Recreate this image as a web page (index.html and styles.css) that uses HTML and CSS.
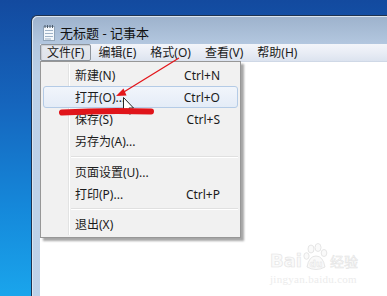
FILE: index.html
```html
<html>
<head>
<title>无标题 - 记事本</title>
<link rel="stylesheet" href="styles.css">
</head>
<body>

<div class="desktop">
  <div class="window">
    <div class="titlebar">
      <svg class="app-icon" width="12" height="16" viewBox="0 0 12 16">
        <rect x="0.5" y="1.5" width="11" height="14" fill="#f4f8fc" stroke="#8fa3b8"/>
        <line x1="2" y1="5.5" x2="10" y2="5.5" stroke="#9fb3c8"/>
        <line x1="2" y1="8.5" x2="10" y2="8.5" stroke="#9fb3c8"/>
        <line x1="2" y1="11.5" x2="10" y2="11.5" stroke="#9fb3c8"/>
        <line x1="2" y1="14" x2="8" y2="14" stroke="#9fb3c8"/>
        <line x1="2" y1="0" x2="2" y2="3" stroke="#4d5b6a"/>
        <line x1="4.5" y1="0" x2="4.5" y2="3" stroke="#4d5b6a"/>
        <line x1="7" y1="0" x2="7" y2="3" stroke="#4d5b6a"/>
        <line x1="9.5" y1="0" x2="9.5" y2="3" stroke="#4d5b6a"/>
      </svg>
      <span class="title">无标题 - 记事本</span>
    </div>
    <div class="menubar">
      <span class="menu-item pressed">文件(F)</span>
      <span class="menu-item">编辑(E)</span>
      <span class="menu-item">格式(O)</span>
      <span class="menu-item">查看(V)</span>
      <span class="menu-item">帮助(H)</span>
    </div>
    <div class="client"></div>
  </div>

  <div class="dropdown">
    <div class="row"><span>新建(N)</span><span class="key">Ctrl+N</span></div>
    <div class="row hot"><span>打开(O)...</span><span class="key">Ctrl+O</span></div>
    <div class="row"><span>保存(S)</span><span class="key">Ctrl+S</span></div>
    <div class="row"><span>另存为(A)...</span></div>
    <div class="sep"></div>
    <div class="row"><span>页面设置(U)...</span></div>
    <div class="row"><span>打印(P)...</span><span class="key">Ctrl+P</span></div>
    <div class="sep"></div>
    <div class="row"><span>退出(X)</span></div>
  </div>

  <svg class="marks" width="387" height="296" viewBox="0 0 387 296">
    <!-- mouse pointer -->
    <path d="M123.5 97.5 L123.5 112 L127 108.8 L129.6 114.2 L131.4 113.4 L128.9 108 L133.5 108 Z" fill="#fff" stroke="#111" stroke-width="0.9"/>
    <!-- red arrow -->
    <line x1="179" y1="58" x2="123" y2="92.5" stroke="#e3161b" stroke-width="1.3"/>
    <path d="M116 96 L123.5 88.5 L126.5 95.5 Z" fill="#e3161b"/>
    <!-- red underline -->
    <path d="M62 112.5 Q105 110 151 111.5" stroke="#e0141a" stroke-width="6" stroke-linecap="round" fill="none"/>
  </svg>

  <div class="watermark">
    <div class="brand">
      <span class="bai">Bai</span>
      <svg class="paw" width="26" height="28" viewBox="0 0 26 28">
        <ellipse cx="8" cy="6" rx="3" ry="4" fill="#fafafa" stroke="#e6e6e6"/>
        <ellipse cx="15" cy="4.5" rx="3" ry="4" fill="#fafafa" stroke="#e6e6e6"/>
        <ellipse cx="21" cy="10" rx="2.8" ry="3.5" fill="#fafafa" stroke="#e6e6e6"/>
        <ellipse cx="3.5" cy="13" rx="2.6" ry="3.3" fill="#fafafa" stroke="#e6e6e6"/>
        <path d="M4 24 Q6 13 13 13 Q20 13 22 24 Q13 29 4 24 Z" fill="#fafafa" stroke="#e6e6e6"/>
        <text x="13" y="24" text-anchor="middle" class="du">du</text>
      </svg>
      <span class="jy">经验</span>
    </div>
    <div class="site">jingyan.baidu.com</div>
  </div>
</div>

</body>
</html>
```

FILE: styles.css
```css
* {
  box-sizing: border-box;
}
body {
  margin: 0;
  font-family: "Noto Sans", "Noto Sans CJK SC", sans-serif;
  font-size: 12px;
  color: #1b1b1b;
}
.desktop {
  position: relative;
  width: 387px;
  height: 296px;
  overflow: hidden;
  padding: 15px 0 0 31px;
  background: linear-gradient(to bottom, #134a9f 0%, #1565bd 35%, #1588da 70%, #1aa5ec 100%);
}

/* window frame */
.window {
  width: 420px;
  height: 320px;
  display: flex;
  flex-direction: column;
  padding-left: 8px;
  border: 1px solid #1e3350;
  border-right: none;
  border-bottom: none;
  border-top-left-radius: 6px;
  background: linear-gradient(to bottom, #9db2cc 0px, #b3c7df 28px, #bcd0e7 60px, #bed2e9 100%);
  box-shadow: inset 1px 1px 0 #dbe5f0;
}
.titlebar {
  height: 28px;
  display: flex;
  align-items: center;
  padding: 5px 0 0 3px;
  gap: 5px;
}
.app-icon {
  margin-top: 1px;
}
.title {
  font-size: 13px;
  color: #111;
}
.menubar {
  height: 17px;
  display: flex;
  align-items: stretch;
  background: linear-gradient(to bottom, #f3f5fa 0%, #e9edf5 50%, #dce3ef 100%);
}
.menu-item {
  display: flex;
  align-items: center;
  padding: 0 6px 1px;
  border: 1px solid transparent;
  border-radius: 2px;
}
.menu-item.pressed {
  border-color: #8d949c;
  background: linear-gradient(to bottom, #e6e9ee, #dfe3ea);
  box-shadow: inset 1px 1px 1px rgba(0, 0, 0, 0.12);
}
.client {
  flex: 1;
  background: #fff;
  border-top: 1px solid #cfd8e6;
}

/* file menu */
.dropdown {
  position: absolute;
  left: 40px;
  top: 61px;
  width: 201px;
  height: 177px;
  padding: 2px 2px 0;
  background: #f1f1f1;
  border: 1px solid #979797;
  box-shadow: 3px 3px 2px rgba(0, 0, 0, 0.35);
}
.dropdown:before {
  content: "";
  position: absolute;
  left: 27px;
  top: 2px;
  bottom: 2px;
  width: 1px;
  background: #e2e3e3;
  border-right: 1px solid #fff;
}
.row {
  position: relative;
  height: 22px;
  display: flex;
  align-items: center;
  justify-content: space-between;
  padding: 0 17px 0 31px;
  border: 1px solid transparent;
  border-radius: 3px;
}
.row.hot {
  border-color: #b4cbe6;
  background: linear-gradient(to bottom, #f1f5fb, #e4ecf7);
}
.sep {
  height: 9px;
  margin-left: 28px;
  display: flex;
  flex-direction: column;
  justify-content: center;
}
.sep:before {
  content: "";
  height: 1px;
  background: #e0e0e0;
  border-bottom: 1px solid #fff;
  box-sizing: content-box;
}
.sep + .row + .row + .sep {
  height: 8px;
}

/* annotations */
.marks {
  position: absolute;
  left: 0;
  top: 0;
}

/* baidu watermark */
.watermark {
  position: absolute;
  left: 270px;
  top: 241px;
  width: 90px;
  color: #fafafa;
}
.brand {
  display: flex;
  align-items: flex-end;
  height: 30px;
}
.bai {
  font-family: "DejaVu Sans", sans-serif;
  font-weight: bold;
  font-size: 18px;
  line-height: 20px;
  -webkit-text-stroke: 0.6px #e3e3e3;
}
.paw {
  margin: 0 1px;
}
.du {
  font-family: "DejaVu Sans", sans-serif;
  font-size: 9px;
  font-weight: bold;
  fill: #fafafa;
  stroke: #e0e0e0;
  stroke-width: 0.4px;
}
.jy {
  font-family: "Noto Sans CJK SC", sans-serif;
  font-size: 14px;
  line-height: 20px;
  -webkit-text-stroke: 0.5px #e3e3e3;
}
.site {
  font-family: "Liberation Serif", serif;
  font-size: 11px;
  color: #ececec;
  margin-top: 2px;
  letter-spacing: 0.3px;
}
```
